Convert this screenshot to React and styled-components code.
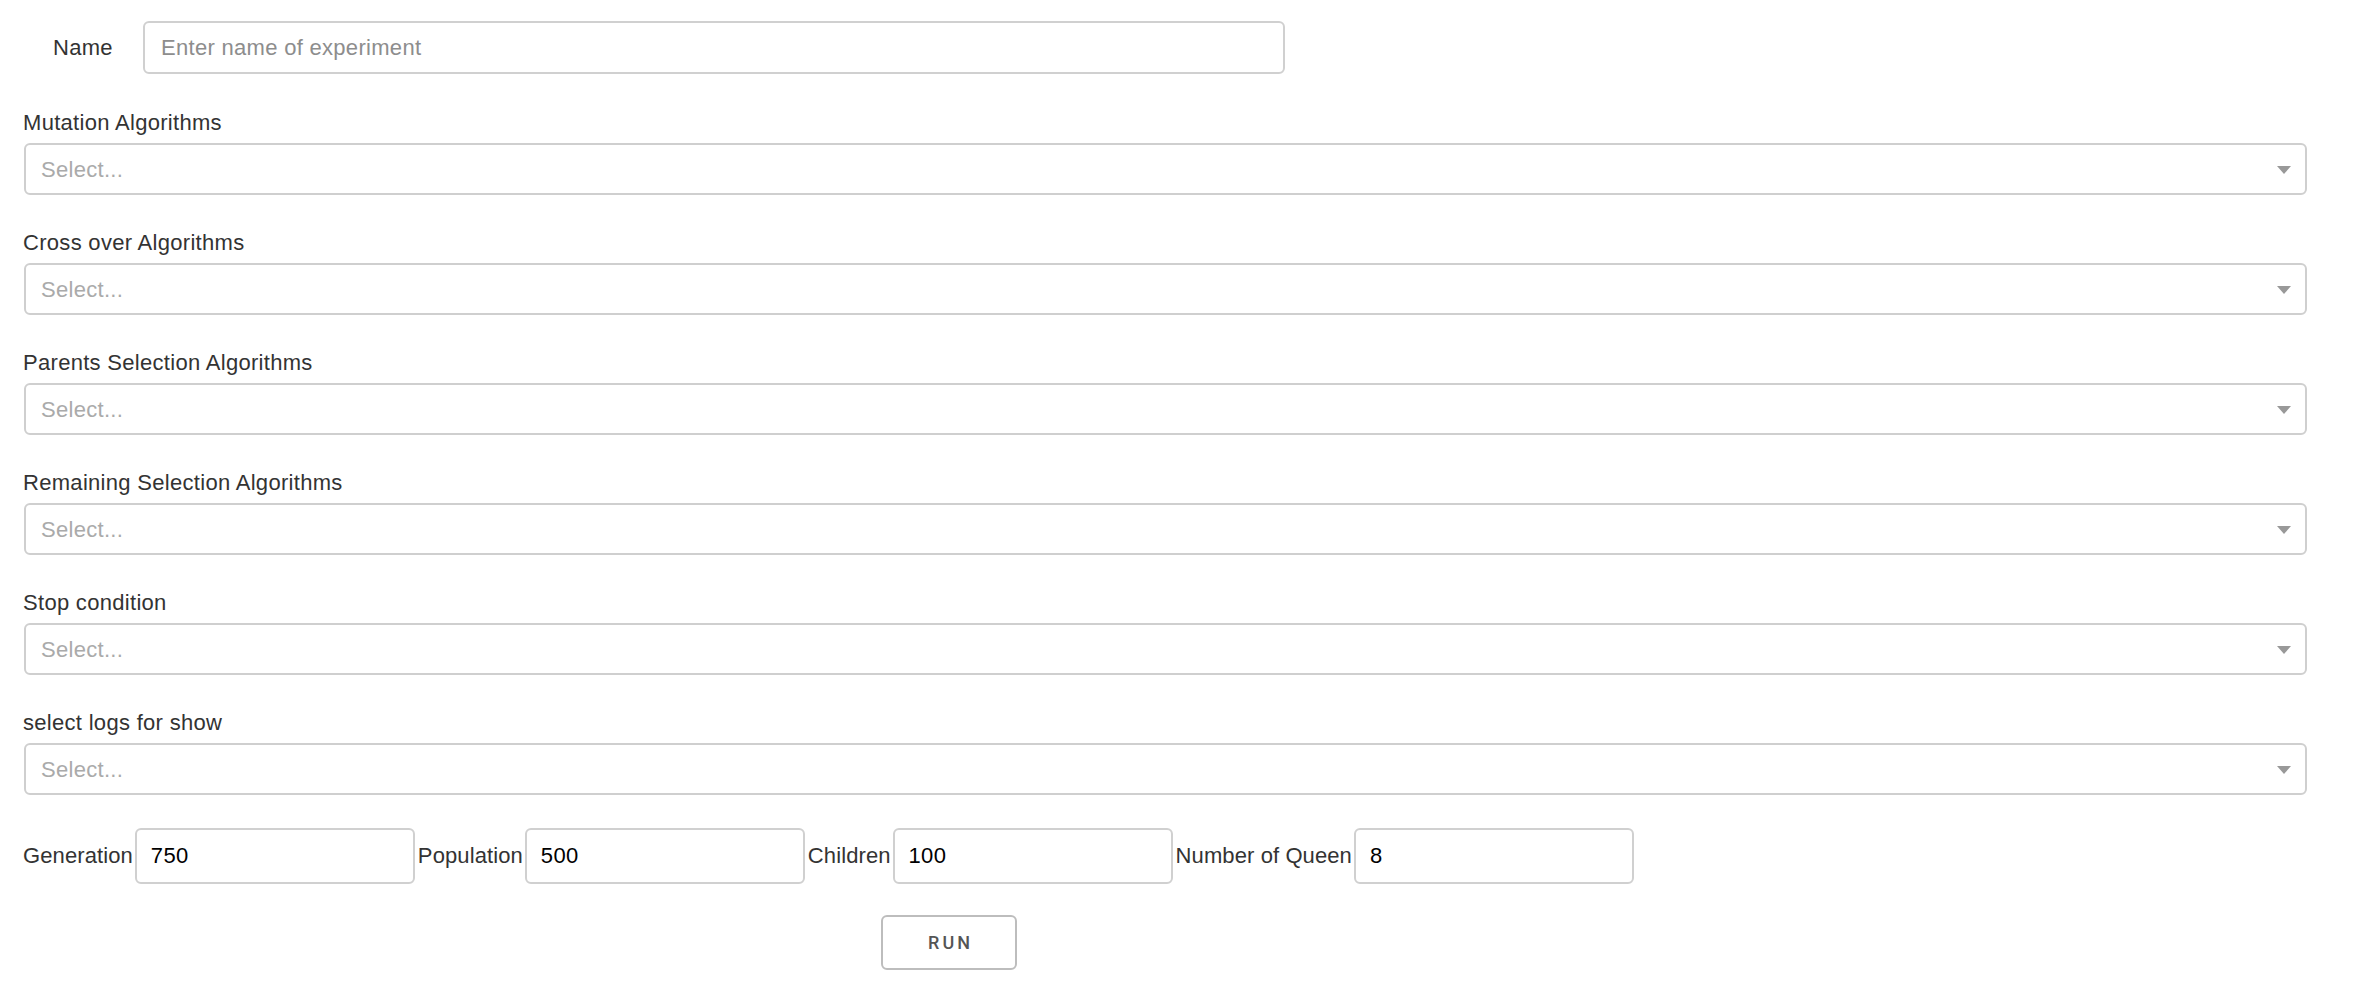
import React from "react";
import styled, { createGlobalStyle } from "styled-components";

const GlobalStyle = createGlobalStyle`
  html, body {
    margin: 0;
    padding: 0;
    background: #fff;
  }
  body {
    font-family: "Liberation Sans", Arial, sans-serif;
    color: #333;
  }
  * {
    box-sizing: border-box;
  }
`;

const Page = styled.div`
  padding: 21px 0 40px 23px;
  font-size: 22px;
  letter-spacing: 0.3px;
`;

const NameRow = styled.div`
  display: flex;
  align-items: center;
  height: 53px;
`;

const NameLabel = styled.label`
  width: 120px;
  padding-left: 30px;
  color: #333;
`;

const TextInput = styled.input`
  width: 1142px;
  height: 53px;
  padding: 0 16px;
  border: 2px solid #d0d0d0;
  border-radius: 6px;
  font-family: inherit;
  font-size: 22px;
  letter-spacing: 0.3px;
  color: #000;
  outline: none;

  &::placeholder {
    color: #8d8d8d;
  }
`;

const Field = styled.div`
  display: flex;
  flex-direction: column;
  gap: 5px;
  margin-top: ${(props) => (props.$first ? "34px" : "33px")};
`;

const FieldLabel = styled.label`
  line-height: 30px;
  color: #333;
`;

const SelectControl = styled.div`
  display: flex;
  align-items: center;
  justify-content: space-between;
  width: 2283px;
  height: 52px;
  margin-left: 1px;
  padding: 2px 14px 0 15px;
  border: 2px solid #cfcfcf;
  border-radius: 6px;
  background: #fff;
`;

const Placeholder = styled.span`
  color: #aaa;
`;

const Arrow = styled.span`
  width: 0;
  height: 0;
  border-style: solid;
  border-width: 8px 7px 0 7px;
  border-color: #999 transparent transparent transparent;
`;

const ParamsRow = styled.div`
  display: flex;
  align-items: center;
  margin-top: 33px;
`;

const ParamLabel = styled.label`
  margin-left: ${(props) => (props.$first ? "0" : "3px")};
  margin-right: 2px;
  letter-spacing: 0.1px;
  color: #333;
`;

const NumberInput = styled.input`
  width: 280px;
  height: 56px;
  padding: 0 14px;
  border: 2px solid #d0d0d0;
  border-radius: 6px;
  font-family: inherit;
  font-size: 22px;
  letter-spacing: 0.3px;
  color: #000;
  outline: none;
`;

const RunButton = styled.button`
  display: block;
  width: 136px;
  height: 55px;
  margin: 31px 0 0 858px;
  border: 2px solid #bdbdbd;
  border-radius: 6px;
  background: #fff;
  font-family: Roboto, "Liberation Sans", sans-serif;
  font-size: 18px;
  font-weight: 500;
  letter-spacing: 3px;
  padding: 0 0 0 3px;
  color: #555;
  cursor: pointer;
`;

const selects = [
  "Mutation Algorithms",
  "Cross over Algorithms",
  "Parents Selection Algorithms",
  "Remaining Selection Algorithms",
  "Stop condition",
  "select logs for show",
];

const params = [
  { label: "Generation", value: "750" },
  { label: "Population", value: "500" },
  { label: "Children", value: "100" },
  { label: "Number of Queen", value: "8" },
];

const App = () => {
  return (
    <>
      <GlobalStyle />
      <Page>
        <NameRow>
          <NameLabel htmlFor="name">Name</NameLabel>
          <TextInput id="name" type="text" placeholder="Enter name of experiment" />
        </NameRow>

        {selects.map((label, i) => (
          <Field key={label} $first={i === 0}>
            <FieldLabel>{label}</FieldLabel>
            <SelectControl>
              <Placeholder>Select...</Placeholder>
              <Arrow />
            </SelectControl>
          </Field>
        ))}

        <ParamsRow>
          {params.map((p, i) => (
            <React.Fragment key={p.label}>
              <ParamLabel $first={i === 0}>{p.label}</ParamLabel>
              <NumberInput type="number" defaultValue={p.value} />
            </React.Fragment>
          ))}
        </ParamsRow>

        <RunButton>RUN</RunButton>
      </Page>
    </>
  );
};

export default App;
